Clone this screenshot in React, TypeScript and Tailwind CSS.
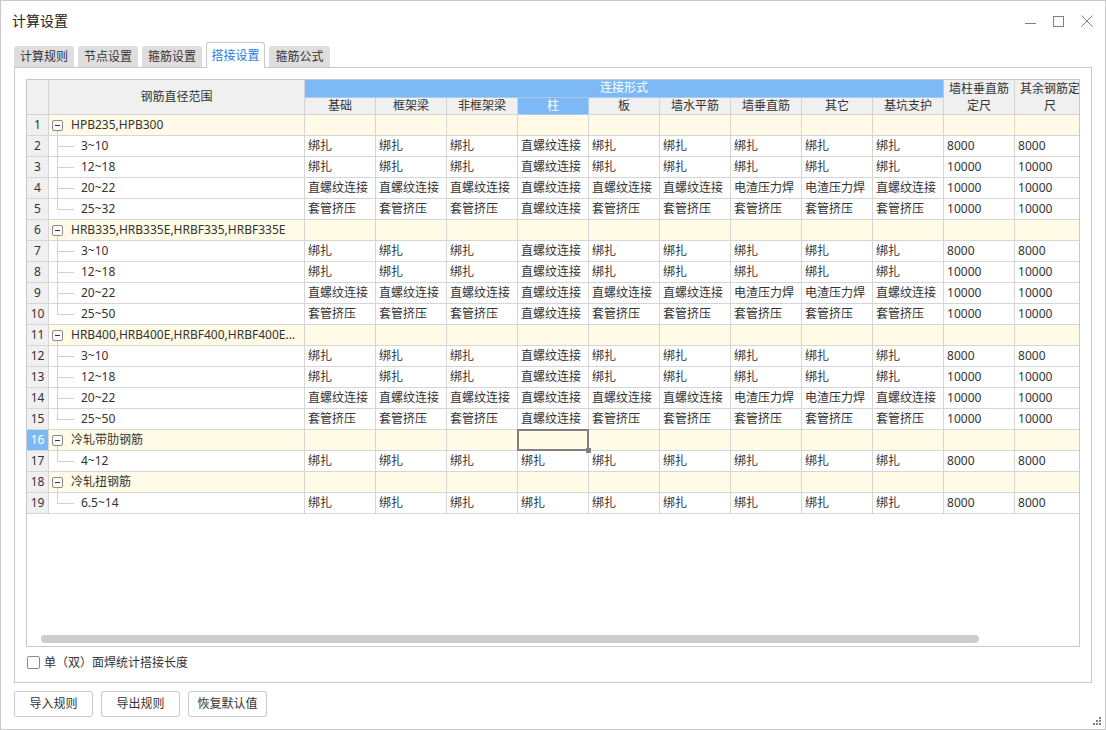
import React from "react";

type Row =
  | { kind: "group"; label: string }
  | { kind: "child"; label: string; vals: string[]; last: boolean };

const cols = ["基础", "框架梁", "非框架梁", "柱", "板", "墙水平筋", "墙垂直筋", "其它", "基坑支护"];

const B = "绑扎";
const Z = "直螺纹连接";
const D = "电渣压力焊";
const T = "套管挤压";

const small = [B, B, B, Z, B, B, B, B, B];
const mid = [Z, Z, Z, Z, Z, Z, D, D, Z];
const big = [T, T, T, Z, T, T, T, T, T];
const allB = [B, B, B, B, B, B, B, B, B];

function group(label: string, kids: [string, string[]][]): Row[] {
  const out: Row[] = [{ kind: "group", label }];
  kids.forEach(([l, v], i) =>
    out.push({ kind: "child", label: l, vals: v, last: i === kids.length - 1 })
  );
  return out;
}

const rows: Row[] = [
  ...group("HPB235,HPB300", [
    ["3~10", [...small, "8000", "8000"]],
    ["12~18", [...small, "10000", "10000"]],
    ["20~22", [...mid, "10000", "10000"]],
    ["25~32", [...big, "10000", "10000"]],
  ]),
  ...group("HRB335,HRB335E,HRBF335,HRBF335E", [
    ["3~10", [...small, "8000", "8000"]],
    ["12~18", [...small, "10000", "10000"]],
    ["20~22", [...mid, "10000", "10000"]],
    ["25~50", [...big, "10000", "10000"]],
  ]),
  ...group("HRB400,HRB400E,HRBF400,HRBF400E...", [
    ["3~10", [...small, "8000", "8000"]],
    ["12~18", [...small, "10000", "10000"]],
    ["20~22", [...mid, "10000", "10000"]],
    ["25~50", [...big, "10000", "10000"]],
  ]),
  ...group("冷轧带肋钢筋", [["4~12", [...allB, "8000", "8000"]]]),
  ...group("冷轧扭钢筋", [["6.5~14", [...allB, "8000", "8000"]]]),
];

const tabs = ["计算规则", "节点设置", "箍筋设置", "搭接设置", "箍筋公式"];
const tabW = ["w-[60px]", "w-[60px]", "w-[60px]", "w-[59px]", "w-[61px]"];

function TreeCell({ row }: { row: Row }) {
  if (row.kind === "group") {
    return (
      <div className="relative h-[20px] flex items-center whitespace-nowrap overflow-hidden">
        <span className="ml-[3px] w-[11px] h-[11px] border border-[#8a8a8a] rounded-[2px] bg-white flex items-center justify-center">
          <span className="w-[5px] h-px bg-[#333]" />
        </span>
        <span className="ml-[8px]">{row.label}</span>
        <span className="absolute left-[8px] top-[16px] bottom-0 w-px bg-[#d0d0d0]" />
      </div>
    );
  }
  return (
    <div className="relative h-[20px] flex items-center whitespace-nowrap">
      <span
        className={
          row.last
            ? "absolute left-[8px] top-0 h-[10px] w-px bg-[#d0d0d0]"
            : "absolute left-[8px] top-0 bottom-[-1px] w-px bg-[#d0d0d0]"
        }
      />
      <span className="absolute left-[8px] top-[10px] w-[17px] h-px bg-[#d0d0d0]" />
      <span className="pl-[32px]">{row.label}</span>
    </div>
  );
}

export default function App() {
  return (
    <div
      className="relative w-[1106px] h-[730px] bg-white border border-[#c8c8c8] text-[#333] text-[12px] flex flex-col"
      style={{ fontFamily: '"Noto Sans", "Noto Sans CJK SC", sans-serif' }}
    >
      {/* title bar */}
      <div className="h-[40px] flex items-center justify-between pl-[11px] pr-[12px]">
        <span className="text-[14px] text-[#222] leading-none">计算设置</span>
        <div className="flex items-center gap-[17px] text-[#808080]">
          <svg width="11" height="11" viewBox="0 0 11 11">
            <path d="M0 7.5h11" stroke="#808080" strokeWidth="1" />
          </svg>
          <svg width="11" height="11" viewBox="0 0 11 11">
            <rect x="0.5" y="0.5" width="10" height="10" fill="none" stroke="#808080" />
          </svg>
          <svg width="12" height="12" viewBox="0 0 12 12">
            <path d="M0.5 0.5l11 11M11.5 0.5l-11 11" stroke="#808080" strokeWidth="1" />
          </svg>
        </div>
      </div>

      {/* tabs */}
      <div className="ml-[13px] h-[26px] flex items-end gap-[4px] relative z-10">
        {tabs.map((t, i) =>
          i === 3 ? (
            <div
              key={t}
              className={`${tabW[i]} h-[26px] -mb-px bg-white border border-b-0 border-[#c8c8c8] rounded-t-[3px] flex items-center justify-center text-[#1f7ae0]`}
            >
              {t}
            </div>
          ) : (
            <div
              key={t}
              className={`${tabW[i]} h-[21px] bg-[#dedede] rounded-t-[3px] flex items-center justify-center text-[#333]`}
            >
              {t}
            </div>
          )
        )}
      </div>

      {/* panel */}
      <div className="ml-[13px] w-[1078px] h-[616px] border border-[#c8c8c8] pt-[11px] pl-[11px]">
        <div className="relative w-[1054px] h-[568px] border border-[#c8c8c8] overflow-hidden">
          <table className="table-fixed border-separate border-spacing-0 w-[1059px]">
            <colgroup>
              <col className="w-[22px]" />
              <col className="w-[256px]" />
              {cols.map((c) => (
                <col key={c} className="w-[71px]" />
              ))}
              <col className="w-[71px]" />
              <col className="w-[71px]" />
            </colgroup>
            <thead>
              <tr>
                <th rowSpan={2} className="p-0 bg-[#f0f0f0] border-r border-b border-[#d3d3d3]" />
                <th
                  rowSpan={2}
                  className="p-0 font-normal bg-[#f0f0f0] border-r border-b border-[#d3d3d3] text-center"
                >
                  钢筋直径范围
                </th>
                <th
                  colSpan={9}
                  className="p-0 h-[17px] font-normal bg-[#7db9f5] text-white border-r border-b border-[#a8cdf2] text-center leading-[16px]"
                >
                  连接形式
                </th>
                <th
                  rowSpan={2}
                  className="p-0 font-normal bg-[#f0f0f0] border-r border-b border-[#d3d3d3] text-center leading-[17px]"
                >
                  墙柱垂直筋定尺
                </th>
                <th
                  rowSpan={2}
                  className="p-0 font-normal bg-[#f0f0f0] border-r border-b border-[#d3d3d3] text-center leading-[17px]"
                >
                  其余钢筋定尺
                </th>
              </tr>
              <tr>
                {cols.map((c, i) => (
                  <th
                    key={c}
                    className={
                      i === 3
                        ? "p-0 h-[17px] font-normal bg-[#7db9f5] text-white border-r border-b border-[#a8cdf2] text-center leading-[16px]"
                        : "p-0 h-[17px] font-normal bg-[#f0f0f0] border-r border-b border-[#d3d3d3] text-center leading-[16px]"
                    }
                  >
                    {c}
                  </th>
                ))}
              </tr>
            </thead>
            <tbody>
              {rows.map((r, idx) => {
                const n = idx + 1;
                const isGroup = r.kind === "group";
                const bg = isGroup ? "bg-[#fffbe6]" : "bg-white";
                const numCls =
                  n === 16
                    ? "bg-[#7db9f5] text-white"
                    : "bg-[#f0f0f0] text-[#333]";
                return (
                  <tr key={idx}>
                    <td className={`p-0 h-[21px] border-r border-b border-[#d6d6d6] text-center ${numCls}`}>
                      {n}
                    </td>
                    <td className={`p-0 border-r border-b border-[#d6d6d6] ${bg}`}>
                      <TreeCell row={r} />
                    </td>
                    {Array.from({ length: 11 }).map((_, ci) => {
                      const v = r.kind === "child" ? r.vals[ci] : "";
                      const sel = n === 16 && ci === 3;
                      return (
                        <td
                          key={ci}
                          className={`p-0 border-r border-b border-[#d6d6d6] ${bg}`}
                        >
                          <div className="relative h-[20px] pl-[3px] leading-[20px] whitespace-nowrap overflow-visible">
                            {v}
                            {sel && (
                              <>
                                <span className="absolute -left-px -top-px -right-px -bottom-px border-2 border-[#808080]" />
                                <span className="absolute -right-[3px] -bottom-[3px] w-[5px] h-[5px] bg-[#808080]" />
                              </>
                            )}
                          </div>
                        </td>
                      );
                    })}
                  </tr>
                );
              })}
            </tbody>
          </table>
          <div className="absolute left-[14px] bottom-[3px] w-[938px] h-[8px] rounded-full bg-[#cdcdcd]" />
        </div>

        <label className="mt-[9px] flex items-center gap-[4px] h-[13px] ml-px">
          <span className="w-[13px] h-[13px] border border-[#8a8a8a] rounded-[2px] bg-white" />
          <span>单（双）面焊统计搭接长度</span>
        </label>
      </div>

      {/* buttons */}
      <div className="ml-[13px] mt-[8px] flex gap-[8px]">
        {["导入规则", "导出规则", "恢复默认值"].map((b) => (
          <button
            key={b}
            className="w-[79px] h-[26px] border border-[#c8c8c8] rounded-[3px] bg-white text-[12px] text-[#333]"
          >
            {b}
          </button>
        ))}
      </div>

      {/* resize grip */}
      <svg className="absolute right-[3px] bottom-[3px]" width="9" height="9" viewBox="0 0 9 9">
        <rect x="6" y="0" width="2" height="2" fill="#808080" />
        <rect x="3" y="3" width="2" height="2" fill="#808080" />
        <rect x="6" y="3" width="2" height="2" fill="#808080" />
        <rect x="0" y="6" width="2" height="2" fill="#808080" />
        <rect x="3" y="6" width="2" height="2" fill="#808080" />
        <rect x="6" y="6" width="2" height="2" fill="#808080" />
      </svg>
    </div>
  );
}
